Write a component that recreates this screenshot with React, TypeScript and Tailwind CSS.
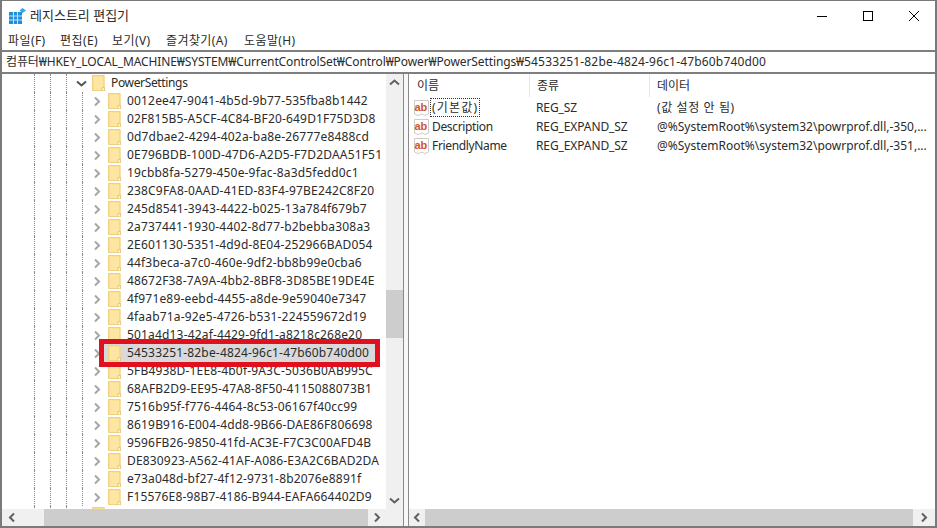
import React from "react";

const rows = [
  "0012ee47-9041-4b5d-9b77-535fba8b1442",
  "02F815B5-A5CF-4C84-BF20-649D1F75D3D8",
  "0d7dbae2-4294-402a-ba8e-26777e8488cd",
  "0E796BDB-100D-47D6-A2D5-F7D2DAA51F51",
  "19cbb8fa-5279-450e-9fac-8a3d5fedd0c1",
  "238C9FA8-0AAD-41ED-83F4-97BE242C8F20",
  "245d8541-3943-4422-b025-13a784f679b7",
  "2a737441-1930-4402-8d77-b2bebba308a3",
  "2E601130-5351-4d9d-8E04-252966BAD054",
  "44f3beca-a7c0-460e-9df2-bb8b99e0cba6",
  "48672F38-7A9A-4bb2-8BF8-3D85BE19DE4E",
  "4f971e89-eebd-4455-a8de-9e59040e7347",
  "4faab71a-92e5-4726-b531-224559672d19",
  "501a4d13-42af-4429-9fd1-a8218c268e20",
  "54533251-82be-4824-96c1-47b60b740d00",
  "5FB4938D-1EE8-4b0f-9A3C-5036B0AB995C",
  "68AFB2D9-EE95-47A8-8F50-4115088073B1",
  "7516b95f-f776-4464-8c53-06167f40cc99",
  "8619B916-E004-4dd8-9B66-DAE86F806698",
  "9596FB26-9850-41fd-AC3E-F7C3C00AFD4B",
  "DE830923-A562-41AF-A086-E3A2C6BAD2DA",
  "e73a048d-bf27-4f12-9731-8b2076e8891f",
  "F15576E8-98B7-4186-B944-EAFA664402D9",
];

function Folder() {
  return (
    <svg width="13" height="16" viewBox="0 0 13 16" className="shrink-0">
      <path d="M0 0H12.5V16H0Z" fill="#fde08f" />
      <path d="M0.5 0.5H12V15.5H0.5Z" fill="none" stroke="#f0d082" />
      <path d="M2 2H11V12L9 15H2Z" fill="#fde6a2" />
      <path d="M10 12.5H12.5V16H10Z" fill="#fff2c8" stroke="#d9b75f" strokeWidth="0.6" />
    </svg>
  );
}

function Chevron({ dir, color = "#a6a6a6" }: { dir: "r" | "d" | "l" | "u"; color?: string }) {
  const d = {
    r: "M3 1.5L7 5.5L3 9.5",
    l: "M7 1.5L3 5.5L7 9.5",
    d: "M1 3.5L5.5 7.5L10 3.5",
    u: "M1 7.5L5.5 3.5L10 7.5",
  }[dir];
  return (
    <svg width="11" height="11" viewBox="0 0 11 11" className="shrink-0">
      <path d={d} fill="none" stroke={color} strokeWidth="2" />
    </svg>
  );
}

function Guides({ n }: { n: number }) {
  return (
    <>
      {Array.from({ length: n }).map((_, i) => (
        <div key={i} className="h-full w-4 shrink-0 border-l border-dotted border-[#8a8a8a]" />
      ))}
    </>
  );
}

function AbIcon() {
  return (
    <svg width="15" height="16" viewBox="0 0 15 16" className="shrink-0">
      <path d="M0.5 0.5H14.5V14L11 15.5L8 14L4 15.5L0.5 14Z" fill="#fff" stroke="#cfcac4" />
      <text x="0.5" y="10.5" fontSize="11" fontWeight="700" fill="#d2532a" fontFamily="'Liberation Sans',sans-serif">ab</text>
    </svg>
  );
}

function HScroll({ thumb, left, right }: { thumb: string; left: string; right: string }) {
  return (
    <div className="flex h-[17px] shrink-0 items-center bg-[#f0f0f0]">
      <div className={`${left} flex h-full items-center justify-center`}><Chevron dir="l" color="#606060" /></div>
      <div className={`${thumb} h-full bg-[#cdcdcd]`} />
      <div className="flex-1" />
      <div className={`${right} flex h-full items-center justify-center`}><Chevron dir="r" color="#606060" /></div>
    </div>
  );
}

function ValueRow({ name, type, data, focus }: { name: string; type: string; data: string; focus?: boolean }) {
  return (
    <div className="flex h-[19px] items-center">
      <div className="flex w-[127px] shrink-0 items-center pl-[5px]">
        <AbIcon />
        <span className={`ml-[2px] px-[1px] leading-[17px] ${focus ? "tracking-[1.2px] outline outline-1 outline-dotted outline-[#333]" : "tracking-[-0.35px]"}`}>{name}</span>
      </div>
      <div className="w-[121px] shrink-0 tracking-[-0.1px]">{type}</div>
      <div className={`whitespace-nowrap ${focus ? "tracking-[0.6px]" : ""}`}>{data}</div>
    </div>
  );
}

export default function App() {
  return (
    <div
      className="relative flex h-[528px] w-[937px] flex-col overflow-hidden border-2 border-t-[1px] border-[#7a7a7a] bg-white text-[12px] text-[#2b2b2b]"
      style={{ fontFamily: "'Noto Sans','Noto Sans CJK KR',sans-serif" }}
    >
      {/* title bar */}
      <div className="flex h-[30px] shrink-0 items-center">
        <svg width="17" height="17" viewBox="0 0 17 17" className="ml-[7px] shrink-0">
          <rect x="0" y="4" width="13" height="12" fill="#1e8fd8" />
          <path d="M4.5 4V16M8.5 4V16M0 8H13M0 12H13" stroke="#bfe3f7" strokeWidth="1" />
          <path d="M13.5 0L17 2.5L13.5 5L10.5 2.5Z" fill="#35a6e6" />
        </svg>
        <span className="ml-[4px] text-[13px]">레지스트리 편집기</span>
        <div className="ml-auto flex items-center">
          <svg width="12" height="12" viewBox="0 0 12 12" className="mr-[34px]"><path d="M1 6.5H11" stroke="#000" /></svg>
          <svg width="12" height="12" viewBox="0 0 12 12" className="mr-[34px]"><rect x="1.5" y="1.5" width="9" height="9" fill="none" stroke="#000" /></svg>
          <svg width="12" height="12" viewBox="0 0 12 12" className="mr-[15px]"><path d="M1 1L11 11M11 1L1 11" stroke="#000" /></svg>
        </div>
      </div>
      {/* menu */}
      <div className="flex h-[21px] shrink-0 items-center border-b-2 border-[#7f7f7f] pl-[6px] tracking-[0.4px]">
        <span className="w-[52px]">파일(F)</span>
        <span className="w-[52px]">편집(E)</span>
        <span className="w-[54px]">보기(V)</span>
        <span className="w-[78px]">즐겨찾기(A)</span>
        <span>도움말(H)</span>
      </div>
      {/* address */}
      <div className="flex h-[22px] shrink-0 items-center border-b-2 border-[#7f7f7f] pl-[4px] whitespace-nowrap">
        <span className="tracking-[-0.11px]">컴퓨터₩HKEY_LOCAL_MACHINE₩SYSTEM₩CurrentControlSet₩Control₩Power₩PowerSettings₩</span>
        <span className="tracking-[0.17px]">54533251-82be-4824-96c1-47b60b740d00</span>
      </div>
      {/* panes */}
      <div className="flex min-h-0 flex-1">
        <div className="flex w-[402px] shrink-0 flex-col border-r border-[#8a8a8a]">
          <div className="flex min-h-0 flex-1">
            <div className="min-h-0 flex-1 overflow-hidden">
              <div className="flex h-[18px] items-center pl-[32px]">
                <Guides n={3} />
                <div className="-ml-[6px] flex w-[10px] items-center"><Chevron dir="d" color="#555" /></div>
                <div className="ml-[6px]"><Folder /></div>
                <span className="ml-[6px] tracking-[-0.35px]">PowerSettings</span>
              </div>
              {rows.map((r, i) => (
                <div key={r} className="flex h-[18px] items-center pl-[32px]">
                  <Guides n={4} />
                  <div className="-ml-[6px] w-[10px]"><Chevron dir="r" /></div>
                  <div className={`ml-[2px] flex h-full items-center ${i === 14 ? "w-[272px] bg-[#d9d9d9]" : ""}`}>
                    <div className="ml-[4px]"><Folder /></div>
                    <span className="ml-[6px] whitespace-nowrap tracking-[0.17px]">{r}</span>
                  </div>
                </div>
              ))}
              <div className="flex h-[18px] items-center pl-[32px]">
                <Guides n={3} />
                <div className="ml-[10px]"><Folder /></div>
              </div>
            </div>
            <div className="flex w-[17px] shrink-0 flex-col bg-[#f0f0f0]">
              <div className="flex h-[17px] shrink-0 items-center justify-center"><Chevron dir="u" color="#606060" /></div>
              <div className="h-[199px] shrink-0" />
              <div className="h-[48px] shrink-0 bg-[#cdcdcd]" />
              <div className="flex-1" />
              <div className="flex h-[17px] shrink-0 items-center justify-center"><Chevron dir="d" color="#606060" /></div>
            </div>
          </div>
          <HScroll left="w-[20px] ml-0" thumb="w-[324px] ml-[22px]" right="w-[17px] mr-[17px]" />
        </div>
        <div className="w-[4px] shrink-0 bg-[#f7f7f7]" />
        <div className="flex min-w-0 flex-1 flex-col border-l border-[#8a8a8a]">
          <div className="flex h-[23px] shrink-0 items-center">
            <div className="flex h-full w-[121px] items-center border-r border-[#e5e5e5] pl-[8px]">이름</div>
            <div className="flex h-full w-[120px] items-center border-r border-[#e5e5e5] pl-[7px]">종류</div>
            <div className="flex h-full items-center pl-[7px]">데이터</div>
          </div>
          <div className="min-h-0 flex-1 overflow-hidden pt-[1px]">
            <ValueRow name="(기본값)" type="REG_SZ" data="(값 설정 안 됨)" focus />
            <ValueRow name="Description" type="REG_EXPAND_SZ" data="@%SystemRoot%\system32\powrprof.dll,-350,..." />
            <ValueRow name="FriendlyName" type="REG_EXPAND_SZ" data="@%SystemRoot%\system32\powrprof.dll,-351,..." />
          </div>
          <HScroll left="w-[16px]" thumb="w-[488px]" right="w-[21px]" />
        </div>
      </div>
      {/* red annotation */}
      <div className="absolute left-[97px] top-[338px] h-[28px] w-[281px] border-[5px] border-[#e0101f]" />
    </div>
  );
}
